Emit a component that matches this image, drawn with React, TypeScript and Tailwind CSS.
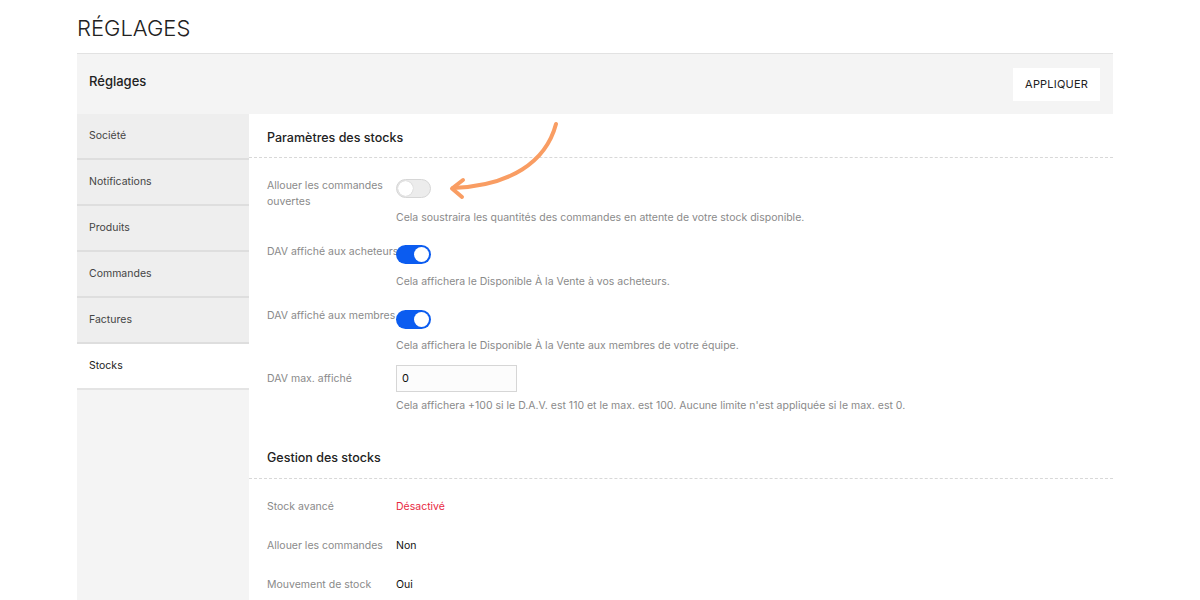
import React from "react";

const font = { fontFamily: "Inter, 'Noto Sans', sans-serif" };

const navItems = ["Société", "Notifications", "Produits", "Commandes", "Factures", "Stocks"];

function Toggle({ on }: { on: boolean }) {
  return (
    <div
      className={
        on
          ? "w-[35px] h-[19px] rounded-full bg-[#0b5cf0] p-[2px] flex justify-end shrink-0"
          : "w-[35px] h-[19px] rounded-full bg-[#ececec] border border-[#d6d6d6] p-[1px] flex justify-start shrink-0"
      }
    >
      <div className={on ? "w-[15px] h-[15px] rounded-full bg-white" : "w-[15px] h-[15px] rounded-full bg-white shadow-[0_0_1px_rgba(0,0,0,0.3)]"} />
    </div>
  );
}

function SettingRow({
  label,
  control,
  desc,
  labelCls,
  className,
}: {
  label: string;
  control: React.ReactNode;
  desc: string;
  labelCls?: string;
  className?: string;
}) {
  return (
    <div className={`flex ${className ?? ""}`}>
      <div className={`w-[129px] shrink-0 text-[10.5px] leading-[16px] text-[#8a8a8a] ${labelCls ?? ""}`}>{label}</div>
      <div className="flex flex-col">
        {control}
        <p className="text-[10.5px] leading-[16px] text-[#8a8a8a]">{desc}</p>
      </div>
    </div>
  );
}

export default function App() {
  return (
    <div className="w-[1200px] h-[600px] bg-white overflow-hidden" style={font}>
      <div className="pl-[77px] pr-[87px]">
        <h1 className="pt-[14px] h-[53px] text-[22px] leading-[28px] font-light text-[#222]">RÉGLAGES</h1>
        <div className="border-t border-[#e2e2e2]">
          <div className="h-[60px] bg-[#f4f4f4] flex items-center justify-between pl-[12px] pr-[13px]">
            <span className="mb-[4px] text-[13px] font-medium text-[#222]">Réglages</span>
            <button className="h-[33px] px-[12px] bg-white text-[11px] text-[#222] tracking-[0.2px]">APPLIQUER</button>
          </div>
          <div className="flex">
            <nav className="w-[172px] shrink-0 flex flex-col bg-[#f4f4f4] h-[490px]">
              <div className="bg-[#eeeeee]">
                {navItems.map((item) => (
                  <div
                    key={item}
                    className={
                      item === "Stocks"
                        ? "h-[46px] flex items-center pl-[12px] text-[10.5px] text-[#222] bg-white border-b-2 border-[#e4e4e4]"
                        : "h-[46px] flex items-center pl-[12px] text-[10.5px] text-[#444] border-b-2 border-[#dedede]"
                    }
                  >
                    {item}
                  </div>
                ))}
              </div>
              <div className="flex-1 bg-[#f4f4f4]" />
            </nav>
            <main className="flex-1 relative">
              <h2 className="h-[44px] flex items-end pb-[9px] pl-[18px] text-[12.5px] font-medium text-[#222] border-b border-dashed border-[#d8d8d8]">
                Paramètres des stocks
              </h2>
              <div className="pl-[18px] pt-[20px] flex flex-col">
                <SettingRow
                  label="Allouer les commandes ouvertes"
                  labelCls="pr-[8px]"
                  control={<div className="pt-[1px] pb-[12px]"><Toggle on={false} /></div>}
                  desc="Cela soustraira les quantités des commandes en attente de votre stock disponible."
                />
                <SettingRow
                  className="mt-[18px]"
                  label="DAV affiché aux acheteurs"
                  labelCls="whitespace-nowrap"
                  control={<div className="pt-[1px] pb-[10px]"><Toggle on /></div>}
                  desc="Cela affichera le Disponible À la Vente à vos acheteurs."
                />
                <SettingRow
                  className="mt-[18px]"
                  label="DAV affiché aux membres"
                  labelCls="whitespace-nowrap"
                  control={<div className="pt-[2px] pb-[9px]"><Toggle on /></div>}
                  desc="Cela affichera le Disponible À la Vente aux membres de votre équipe."
                />
                <SettingRow
                  className="mt-[10px]"
                  label="DAV max. affiché"
                  labelCls="pt-[7px]"
                  control={
                    <div className="pb-[6px]">
                      <input
                        readOnly
                        value="0"
                        className="w-[121px] h-[27px] border border-[#d6d6d6] bg-[#fcfcfc] px-[5px] text-[11px] text-[#111] outline-none"
                        style={font}
                      />
                    </div>
                  }
                  desc="Cela affichera +100 si le D.A.V. est 110 et le max. est 100. Aucune limite n'est appliquée si le max. est 0."
                />
              </div>
              <h2 className="mt-[14px] h-[51px] flex items-end pb-[10px] pl-[18px] text-[12.5px] font-medium text-[#222] border-b border-dashed border-[#d8d8d8]">
                Gestion des stocks
              </h2>
              <div className="pl-[18px] pt-[20px] flex flex-col gap-[23px] text-[10.5px] leading-[16px]">
                <div className="flex">
                  <span className="w-[129px] text-[#8a8a8a]">Stock avancé</span>
                  <span className="text-[#e8283f]">Désactivé</span>
                </div>
                <div className="flex">
                  <span className="w-[129px] text-[#8a8a8a]">Allouer les commandes</span>
                  <span className="text-[#111]">Non</span>
                </div>
                <div className="flex">
                  <span className="w-[129px] text-[#8a8a8a]">Mouvement de stock</span>
                  <span className="text-[#111]">Oui</span>
                </div>
              </div>
              <svg
                className="absolute left-0 top-0 pointer-events-none"
                width="864"
                height="120"
                viewBox="249 114 864 120"
              >
                <path
                  d="M556 124 C546 162 510 186 453 188"
                  fill="none"
                  stroke="#f99d63"
                  strokeWidth="4"
                  strokeLinecap="round"
                />
                <path
                  d="M463 180 L452 188.5 L462 197"
                  fill="none"
                  stroke="#f99d63"
                  strokeWidth="4"
                  strokeLinecap="round"
                  strokeLinejoin="round"
                />
              </svg>
            </main>
          </div>
        </div>
      </div>
    </div>
  );
}
